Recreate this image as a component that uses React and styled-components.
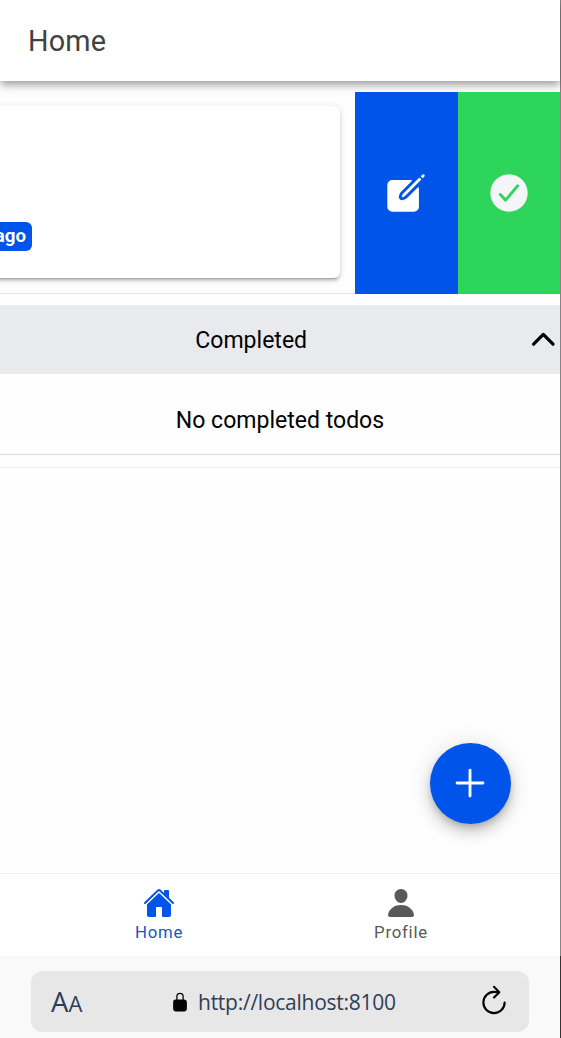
import React from 'react';
import styled, { createGlobalStyle } from 'styled-components';
import {
  IoAdd,
  IoCheckmarkCircle,
  IoChevronUp,
  IoCreate,
  IoHome,
  IoLockClosed,
  IoPerson,
  IoRefresh,
} from 'react-icons/io5';

const GlobalStyle = createGlobalStyle`
  *, *::before, *::after { box-sizing: border-box; }
  body { margin: 0; background: #fff; }
  button { border: 0; padding: 0; margin: 0; font: inherit; background: none; cursor: pointer; }
  svg { display: block; flex: none; }
`;

const Device = styled.div`
  display: flex;
  flex-direction: column;
  width: 561px;
  height: 1038px;
  overflow: hidden;
  font-family: Roboto, sans-serif;
  color: #000;
`;

const Screen = styled.div`
  position: relative;
  display: flex;
  flex-direction: column;
  height: 956px;
  border-right: 1px solid #858585;
  background: #fefefe;
`;

const Header = styled.header`
  position: relative;
  display: flex;
  align-items: center;
  flex: none;
  height: 81px;
  padding: 0 28px;
  background: #fff;
  box-shadow: 0 3px 6px -1.5px rgba(0, 0, 0, 0.2), 0 6px 7px 0 rgba(0, 0, 0, 0.14),
    0 1.5px 14px 0 rgba(0, 0, 0, 0.12);
`;

const Title = styled.h1`
  margin: 0;
  font-size: 28.8px;
  font-weight: 400;
  line-height: 34px;
  letter-spacing: 0.2px;
  color: #424242;
`;

const Content = styled.main`
  flex: 1;
  padding-top: 11px;
  min-height: 0;
`;

const SlidingItem = styled.div`
  position: relative;
  display: flex;
  height: 202px;
  overflow: hidden;
`;

const ItemBody = styled.div`
  flex: 1;
  padding: 14px 15px 15px 0;
  border-bottom: 1px solid #e4e4e4;
`;

const Card = styled.div`
  display: flex;
  align-items: flex-end;
  height: 172px;
  margin-left: -20px;
  padding: 0 0 27px 20px;
  border-radius: 6px;
  background: #fff;
  box-shadow: 0 4px 1.5px -3px rgba(0, 0, 0, 0.2), 0 3px 3px 0 rgba(0, 0, 0, 0.14),
    0 1.5px 7px 0 rgba(0, 0, 0, 0.12);
`;

const Badge = styled.span`
  display: flex;
  align-items: center;
  justify-content: flex-end;
  width: 32px;
  height: 29px;
  padding: 0 6px 1px 0;
  border-radius: 0 6px 6px 0;
  background: #0054e9;
  color: #fff;
  font-size: 18.7px;
  font-weight: 700;
  line-height: 20px;
`;

const SlideOption = styled.button`
  display: flex;
  align-items: center;
  justify-content: center;
  width: ${(p) => p.$width}px;
  padding-right: ${(p) => p.$inset || 0}px;
  background: ${(p) => p.$bg};
  color: ${(p) => p.$color};
`;

const SectionHeader = styled.button`
  display: flex;
  align-items: center;
  width: 100%;
  height: 69px;
  margin-top: 11px;
  background: #e9eaee;
  font-size: 23.04px;
  color: #000;

  span { flex: 1; padding-top: 2px; text-align: center; }
  svg { margin: 0 -1px 0 24px; }
`;

const EmptyRow = styled.div`
  display: flex;
  align-items: center;
  justify-content: center;
  height: 81px;
  padding-top: 13px;
  border-bottom: 1px solid #dedede;
  font-size: 23.04px;
`;

const ListEnd = styled.div`
  height: 13px;
  border-bottom: 1px solid #f0f0f0;
`;

const Fab = styled.button`
  position: absolute;
  right: 49px;
  bottom: 132px;
  display: flex;
  align-items: center;
  justify-content: center;
  width: 81px;
  height: 81px;
  padding: 0 1px 1px 0;
  border-radius: 50%;
  background: #0054e9;
  color: #fff;
  box-shadow: 0 4px 7px -1.5px rgba(0, 0, 0, 0.2), 0 9px 14px 0 rgba(0, 0, 0, 0.14),
    0 1.5px 26px 0 rgba(0, 0, 0, 0.12);
`;

const TabBar = styled.nav`
  display: flex;
  justify-content: center;
  flex: none;
  height: 83px;
  border-top: 1px solid #f0f0f0;
  background: #fff;
`;

const Tab = styled.button`
  display: flex;
  flex-direction: column;
  align-items: center;
  width: 242px;
  padding-top: 13px;
  color: ${(p) => (p.$active ? '#0054e9' : '#595959')};
  font-size: 16.8px;
  letter-spacing: 0.75px;
  line-height: 20px;

  span { margin-top: 3px; color: ${(p) => (p.$active ? '#1457cc' : '#595959')}; }
`;

const BrowserBar = styled.footer`
  flex: none;
  height: 82px;
  padding: 15px 31px 6px;
  border-right: 1px solid #333;
  background: #f9f9f9;
`;

const AddressField = styled.div`
  display: grid;
  grid-template-columns: 120px 1fr 35px;
  align-items: center;
  width: 498px;
  height: 61px;
  padding: 0 17px 0 20px;
  border-radius: 12px;
  background: #e7e7e7;
  font-family: 'Open Sans', 'Noto Sans', sans-serif;
  color: #2f3e58;
`;

const TextSize = styled.span`
  padding-top: 2px;
  font-size: 27.5px;
  font-weight: 400;
  line-height: 36px;

  small { font-size: 22px; }
`;

const Address = styled.span`
  display: flex;
  align-items: center;
  gap: 8px;
  margin-left: -1px;
  font-size: 21px;
  letter-spacing: -0.25px;
  line-height: 28px;
  white-space: nowrap;

  svg { color: #000; }
`;

const Reload = styled.button`
  height: 34px;
  margin-top: -4px;
  color: #000;
`;

export default function App() {
  return (
    <>
      <GlobalStyle />
      <Device>
        <Screen>
          <Header>
            <Title>Home</Title>
          </Header>
          <Content>
            <SlidingItem>
              <ItemBody>
                <Card>
                  <Badge>ago</Badge>
                </Card>
              </ItemBody>
              <SlideOption $width={103} $inset={2} $bg="#0054e9" $color="#fff" aria-label="Edit">
                <IoCreate size={46} />
              </SlideOption>
              <SlideOption $width={102} $bg="#2dd55b" $color="#f4f5f8" aria-label="Complete">
                <IoCheckmarkCircle size={46} />
              </SlideOption>
            </SlidingItem>
            <SectionHeader>
              <span>Completed</span>
              <IoChevronUp size={34.6} />
            </SectionHeader>
            <EmptyRow>No completed todos</EmptyRow>
            <ListEnd />
          </Content>
          <Fab aria-label="Add">
            <IoAdd size={46} />
          </Fab>
          <TabBar>
            <Tab $active>
              <IoHome size={32} />
              <span>Home</span>
            </Tab>
            <Tab>
              <IoPerson size={32} />
              <span>Profile</span>
            </Tab>
          </TabBar>
        </Screen>
        <BrowserBar>
          <AddressField>
            <TextSize>
              A<small>A</small>
            </TextSize>
            <Address>
              <IoLockClosed size={20} />
              http://localhost:8100
            </Address>
            <Reload aria-label="Reload">
              <IoRefresh size={34} />
            </Reload>
          </AddressField>
        </BrowserBar>
      </Device>
    </>
  );
}
